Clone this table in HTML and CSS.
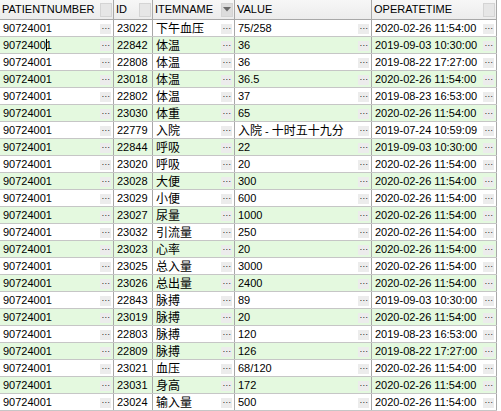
FILE: index.html
```html
<!DOCTYPE html>
<html>
<head>
<meta charset="utf-8">
<link rel="stylesheet" href="styles.css">
</head>
<body>
<div class="grid">
  <div class="row head">
    <div class="cell"><span class="txt">PATIENTNUMBER</span><span class="hbtn"></span></div>
    <div class="cell"><span class="txt">ID</span><span class="hbtn"></span></div>
    <div class="cell"><span class="txt">ITEMNAME</span><span class="hbtn sort"><svg width="8" height="5" viewBox="0 0 8 5"><path d="M0 0h8L4 4.5z" fill="#6b6b6b"/></svg></span></div>
    <div class="cell"><span class="txt">VALUE</span></div>
    <div class="cell"><span class="txt">OPERATETIME</span><span class="hbtn"></span></div>
  </div>
  <div id="rows"></div>
</div>
<script src="app.js"></script>
</body>
</html>
```
FILE: app.js
```js
const data = [
["23022","下午血压","75/258","2020-02-26 11:54:00"],
["22842","体温","36","2019-09-03 10:30:00"],
["22808","体温","36","2019-08-22 17:27:00"],
["23018","体温","36.5","2020-02-26 11:54:00"],
["22802","体温","37","2019-08-23 16:53:00"],
["23030","体重","65","2020-02-26 11:54:00"],
["22779","入院","入院 - 十时五十九分","2019-07-24 10:59:09"],
["22844","呼吸","22","2019-09-03 10:30:00"],
["23020","呼吸","20","2020-02-26 11:54:00"],
["23028","大便","300","2020-02-26 11:54:00"],
["23029","小便","600","2020-02-26 11:54:00"],
["23027","尿量","1000","2020-02-26 11:54:00"],
["23032","引流量","250","2020-02-26 11:54:00"],
["23023","心率","20","2020-02-26 11:54:00"],
["23025","总入量","3000","2020-02-26 11:54:00"],
["23026","总出量","2400","2020-02-26 11:54:00"],
["22843","脉搏","89","2019-09-03 10:30:00"],
["23019","脉搏","20","2020-02-26 11:54:00"],
["22803","脉搏","120","2019-08-23 16:53:00"],
["22809","脉搏","126","2019-08-22 17:27:00"],
["23021","血压","68/120","2020-02-26 11:54:00"],
["23031","身高","172","2020-02-26 11:54:00"],
["23024","输入量","500","2020-02-26 11:54:00"]
];
function esc(s){return s.replace(/&/g,"&amp;").replace(/</g,"&lt;");}
function wrapCjk(s){
  return esc(s).replace(/([\u3400-\u9fff]+)/g,'<span class="cjk">$1</span>');
}
const btn = '<span class="dots">\u22EF</span>';
let html = "";
data.forEach((r,i)=>{
  const pn = i===1 ? '9072400<span class="caret"></span>1' : '90724001';
  html += '<div class="row '+(i%2?'alt':'')+'">'+
    '<div class="cell"><span class="txt">'+pn+'</span>'+btn+'</div>'+
    '<div class="cell"><span class="txt">'+r[0]+'</span></div>'+
    '<div class="cell"><span class="txt">'+wrapCjk(r[1])+'</span>'+btn+'</div>'+
    '<div class="cell"><span class="txt">'+wrapCjk(r[2])+'</span>'+btn+'</div>'+
    '<div class="cell"><span class="txt">'+r[3]+'</span>'+btn+'</div>'+
  '</div>';
});
document.getElementById("rows").innerHTML = html;
```
FILE: styles.css
```css
html, body {
  margin: 0;
  padding: 0;
  background: #ffffff;
}
body {
  font-family: "Liberation Sans", "Noto Sans CJK SC", sans-serif;
  font-size: 11px;
  color: #000;
}
.grid {
  width: 497px;
}
.row {
  display: grid;
  grid-template-columns: 114px 39px 82px 137px 125px;
  height: 16px;
  border-bottom: 1px solid #c6c6c6;
  background: #ffffff;
}
.row.alt {
  background: #e4f9df;
}
.row.head {
  height: 19px;
  border-bottom: 1px solid #a8a8a8;
  background: linear-gradient(#f7f7f7, #ececec);
}
.cell {
  display: flex;
  align-items: center;
  border-right: 1px solid #a8a8a8;
  padding-left: 3px;
  min-width: 0;
  overflow: hidden;
  white-space: nowrap;
  line-height: 16px;
}
.head .cell {
  padding-left: 2px;
  line-height: 19px;
}
.txt {
  flex: 1;
  min-width: 0;
  overflow: hidden;
}
.cjk {
  font-size: 12px;
  font-family: "Noto Sans CJK SC", sans-serif;
  line-height: 16px;
}
.caret {
  display: inline-block;
  width: 1px;
  height: 12px;
  margin-right: -1px;
  background: #000;
  vertical-align: -2px;
}
.dots {
  flex: none;
  width: 11px;
  height: 10px;
  margin-right: 2px;
  margin-top: 1px;
  background: #ececec;
  font-family: "DejaVu Sans", sans-serif;
  font-size: 8px;
  line-height: 10px;
  text-align: center;
  color: #222;
}
.hbtn {
  flex: none;
  width: 12px;
  height: 14px;
  margin-right: 1px;
  box-sizing: border-box;
  background: #e6e6e6;
  border: 1px solid #d4d4d4;
  display: flex;
  align-items: center;
  justify-content: center;
}
.hbtn.sort {
  background: #dcdcdc;
}
```
